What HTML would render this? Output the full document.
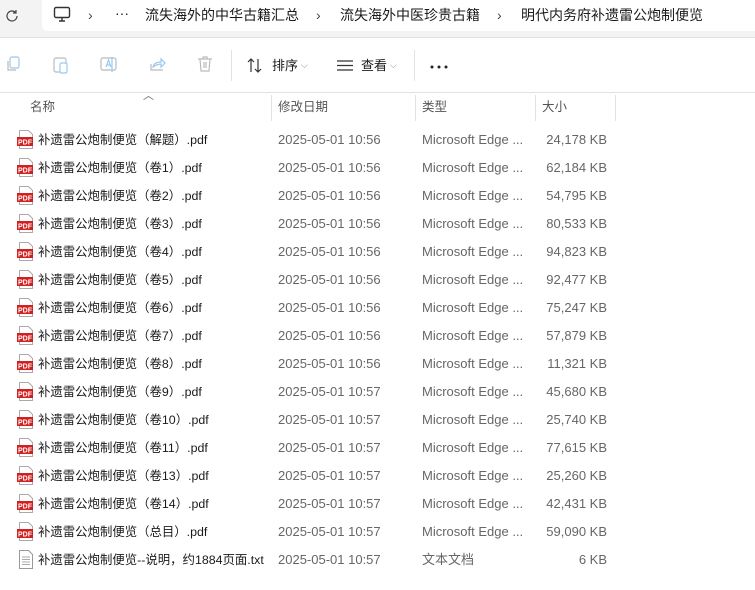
<!DOCTYPE html>
<html><head><meta charset="utf-8"><style>
*{margin:0;padding:0;box-sizing:border-box}
body{width:755px;height:590px;overflow:hidden;background:#fff;font-family:"Liberation Sans","Noto Sans CJK SC",sans-serif;color:#1a1a1a;position:relative}
.top{position:absolute;left:0;top:0;width:755px;height:38px;background:#f3f3f3;border-bottom:1px solid #e0e0e0}
.addr{position:absolute;left:42px;top:0;right:0;height:31px;background:#fff;border-radius:0 0 0 6px}
.t{position:absolute;white-space:nowrap;font-size:13px;line-height:16px}
.crumb{font-size:14px;top:7px}
.tb{position:absolute;left:0;top:39px;width:755px;height:54px;border-bottom:1px solid #e2e2e2}
.sep{position:absolute;width:1px;background:#e2e2e2}
.hdr{color:#555;font-size:12.5px;top:99px}
.row{position:absolute;left:0;width:755px;height:28px}
.row .n{left:38px;top:7px;font-size:12.4px}
.row .d{left:278px;top:7px;color:#666}
.row .y{left:422px;top:7px;color:#666}
.row .s{right:148px;top:7px;color:#666}
.pdf{position:absolute;left:17px;top:5px;width:17px;height:19px}
</style></head><body>
<div class="top"><div class="addr"></div>
<svg style="position:absolute;left:4px;top:8px" width="16" height="16" viewBox="0 0 16 16"><path d="M13 8a5 5 0 1 1-1.5-3.6M12 2v3h-3" fill="none" stroke="#444" stroke-width="1.2"/></svg>
<svg style="position:absolute;left:53px;top:6px" width="18" height="17" viewBox="0 0 18 17"><rect x="1.5" y="1.5" width="15" height="10" rx="1.5" fill="none" stroke="#333" stroke-width="1.4"/><path d="M6 15h6M9 12v3" stroke="#333" stroke-width="1.4"/></svg>
<div class="t crumb" style="left:88px;color:#444">›</div>
<div class="t crumb" style="left:115px;top:5px">···</div>
<div class="t crumb" style="left:145px">流失海外的中华古籍汇总</div>
<div class="t crumb" style="left:316px;color:#444">›</div>
<div class="t crumb" style="left:340px">流失海外中医珍贵古籍</div>
<div class="t crumb" style="left:497px;color:#444">›</div>
<div class="t crumb" style="left:521px">明代内务府补遗雷公炮制便览</div>
</div>
<div class="tb">
<svg style="position:absolute;left:5px;top:17px" width="16" height="17" viewBox="0 0 16 17"><rect x="5" y="1" width="9" height="11" rx="2" fill="none" stroke="#9cc7ee" stroke-width="1.2"/><path d="M3 5v9h8" fill="none" stroke="#bbb" stroke-width="1.2"/></svg>
<svg style="position:absolute;left:53px;top:16px" width="16" height="19" viewBox="0 0 16 19"><rect x="1" y="3" width="12" height="14" rx="2" fill="none" stroke="#bbb" stroke-width="1.2"/><rect x="7" y="8" width="7" height="10" rx="1.5" fill="#fff" stroke="#9cc7ee" stroke-width="1.2"/></svg>
<svg style="position:absolute;left:100px;top:17px" width="18" height="17" viewBox="0 0 18 17"><rect x="1" y="2" width="15" height="12" rx="2" fill="none" stroke="#bbb" stroke-width="1.2"/><path d="M6 11l2.5-7 2.5 7M7 9h3M12 1v15" fill="none" stroke="#9cc7ee" stroke-width="1.2"/></svg>
<svg style="position:absolute;left:149px;top:17px" width="17" height="17" viewBox="0 0 17 17"><path d="M2 8v6h12" fill="none" stroke="#bbb" stroke-width="1.2"/><path d="M4 11c1-4 4-5 8-5V3l4 4-4 4V8c-3 0-5 1-8 3z" fill="none" stroke="#9cc7ee" stroke-width="1.2"/></svg>
<svg style="position:absolute;left:197px;top:17px" width="16" height="17" viewBox="0 0 16 17"><path d="M1 3h14M6 3V1h4v2M3 3l1 12h8l1-12M7 6v6M9 6v6" fill="none" stroke="#bbb" stroke-width="1.2"/></svg>
<div class="sep" style="left:231px;top:11px;height:31px"></div>
<svg style="position:absolute;left:247px;top:19px" width="16" height="15" viewBox="0 0 16 15"><path d="M4 14V1M1 4l3-3 3 3M11 1v13M8 11l3 3 3-3" fill="none" stroke="#333" stroke-width="1.2"/></svg>
<div class="t" style="left:272px;top:19px">排序</div>
<div class="t" style="left:301px;top:18px;font-size:9px;color:#888">⌵</div>
<svg style="position:absolute;left:337px;top:21px" width="16" height="11" viewBox="0 0 16 11"><path d="M0 1h16M0 5.5h16M0 10h16" stroke="#333" stroke-width="1.2"/></svg>
<div class="t" style="left:361px;top:19px">查看</div>
<div class="t" style="left:390px;top:18px;font-size:9px;color:#888">⌵</div>
<div class="sep" style="left:414px;top:11px;height:31px"></div>
<svg style="position:absolute;left:430px;top:26px" width="18" height="4" viewBox="0 0 18 4"><circle cx="2" cy="2" r="1.5" fill="#222"/><circle cx="9" cy="2" r="1.5" fill="#222"/><circle cx="16" cy="2" r="1.5" fill="#222"/></svg>
</div>
<div class="t" style="left:143px;top:88px;font-size:11px;color:#666">︿</div>
<div class="t hdr" style="left:30px">名称</div>
<div class="sep" style="left:271px;top:95px;height:26px"></div>
<div class="t hdr" style="left:278px">修改日期</div>
<div class="sep" style="left:415px;top:95px;height:26px"></div>
<div class="t hdr" style="left:422px">类型</div>
<div class="sep" style="left:535px;top:95px;height:26px"></div>
<div class="t hdr" style="left:542px">大小</div>
<div class="sep" style="left:615px;top:95px;height:26px"></div>
<div id="rows"></div>
<script>
var d=[["（解题）","10:56","24,178"],["（卷1）","10:56","62,184"],["（卷2）","10:56","54,795"],["（卷3）","10:56","80,533"],["（卷4）","10:56","94,823"],["（卷5）","10:56","92,477"],["（卷6）","10:56","75,247"],["（卷7）","10:56","57,879"],["（卷8）","10:56","11,321"],["（卷9）","10:57","45,680"],["（卷10）","10:57","25,740"],["（卷11）","10:57","77,615"],["（卷13）","10:57","25,260"],["（卷14）","10:57","42,431"],["（总目）","10:57","59,090"]];
var h="";
d.forEach(function(r,i){var top=125+i*28;
h+='<div class="row" style="top:'+top+'px"><svg class="pdf" viewBox="0 0 17 19"><path d="M2.5 .5h9l4 4v14h-13z" fill="#fff" stroke="#aaa"/><rect x="0" y="7" width="16" height="9" fill="#d21f1f"/><text x="8" y="14.5" font-size="7" font-weight="bold" fill="#fff" text-anchor="middle" font-family="Liberation Sans">PDF</text></svg><div class="t n">补遗雷公炮制便览'+r[0]+'.pdf</div><div class="t d">2025-05-01 '+r[1]+'</div><div class="t y">Microsoft Edge ...</div><div class="t s">'+r[2]+' KB</div></div>';});
h+='<div class="row" style="top:545px"><svg class="pdf" viewBox="0 0 17 19"><path d="M2.5 .5h9l4 4v14h-13z" fill="#fff" stroke="#999"/><path d="M5 7h8M5 9.5h8M5 12h8M5 14.5h8" stroke="#aaa"/></svg><div class="t n">补遗雷公炮制便览--说明，约1884页面.txt</div><div class="t d">2025-05-01 10:57</div><div class="t y">文本文档</div><div class="t s">6 KB</div></div>';
document.getElementById("rows").innerHTML=h;
</script>
</body></html>
